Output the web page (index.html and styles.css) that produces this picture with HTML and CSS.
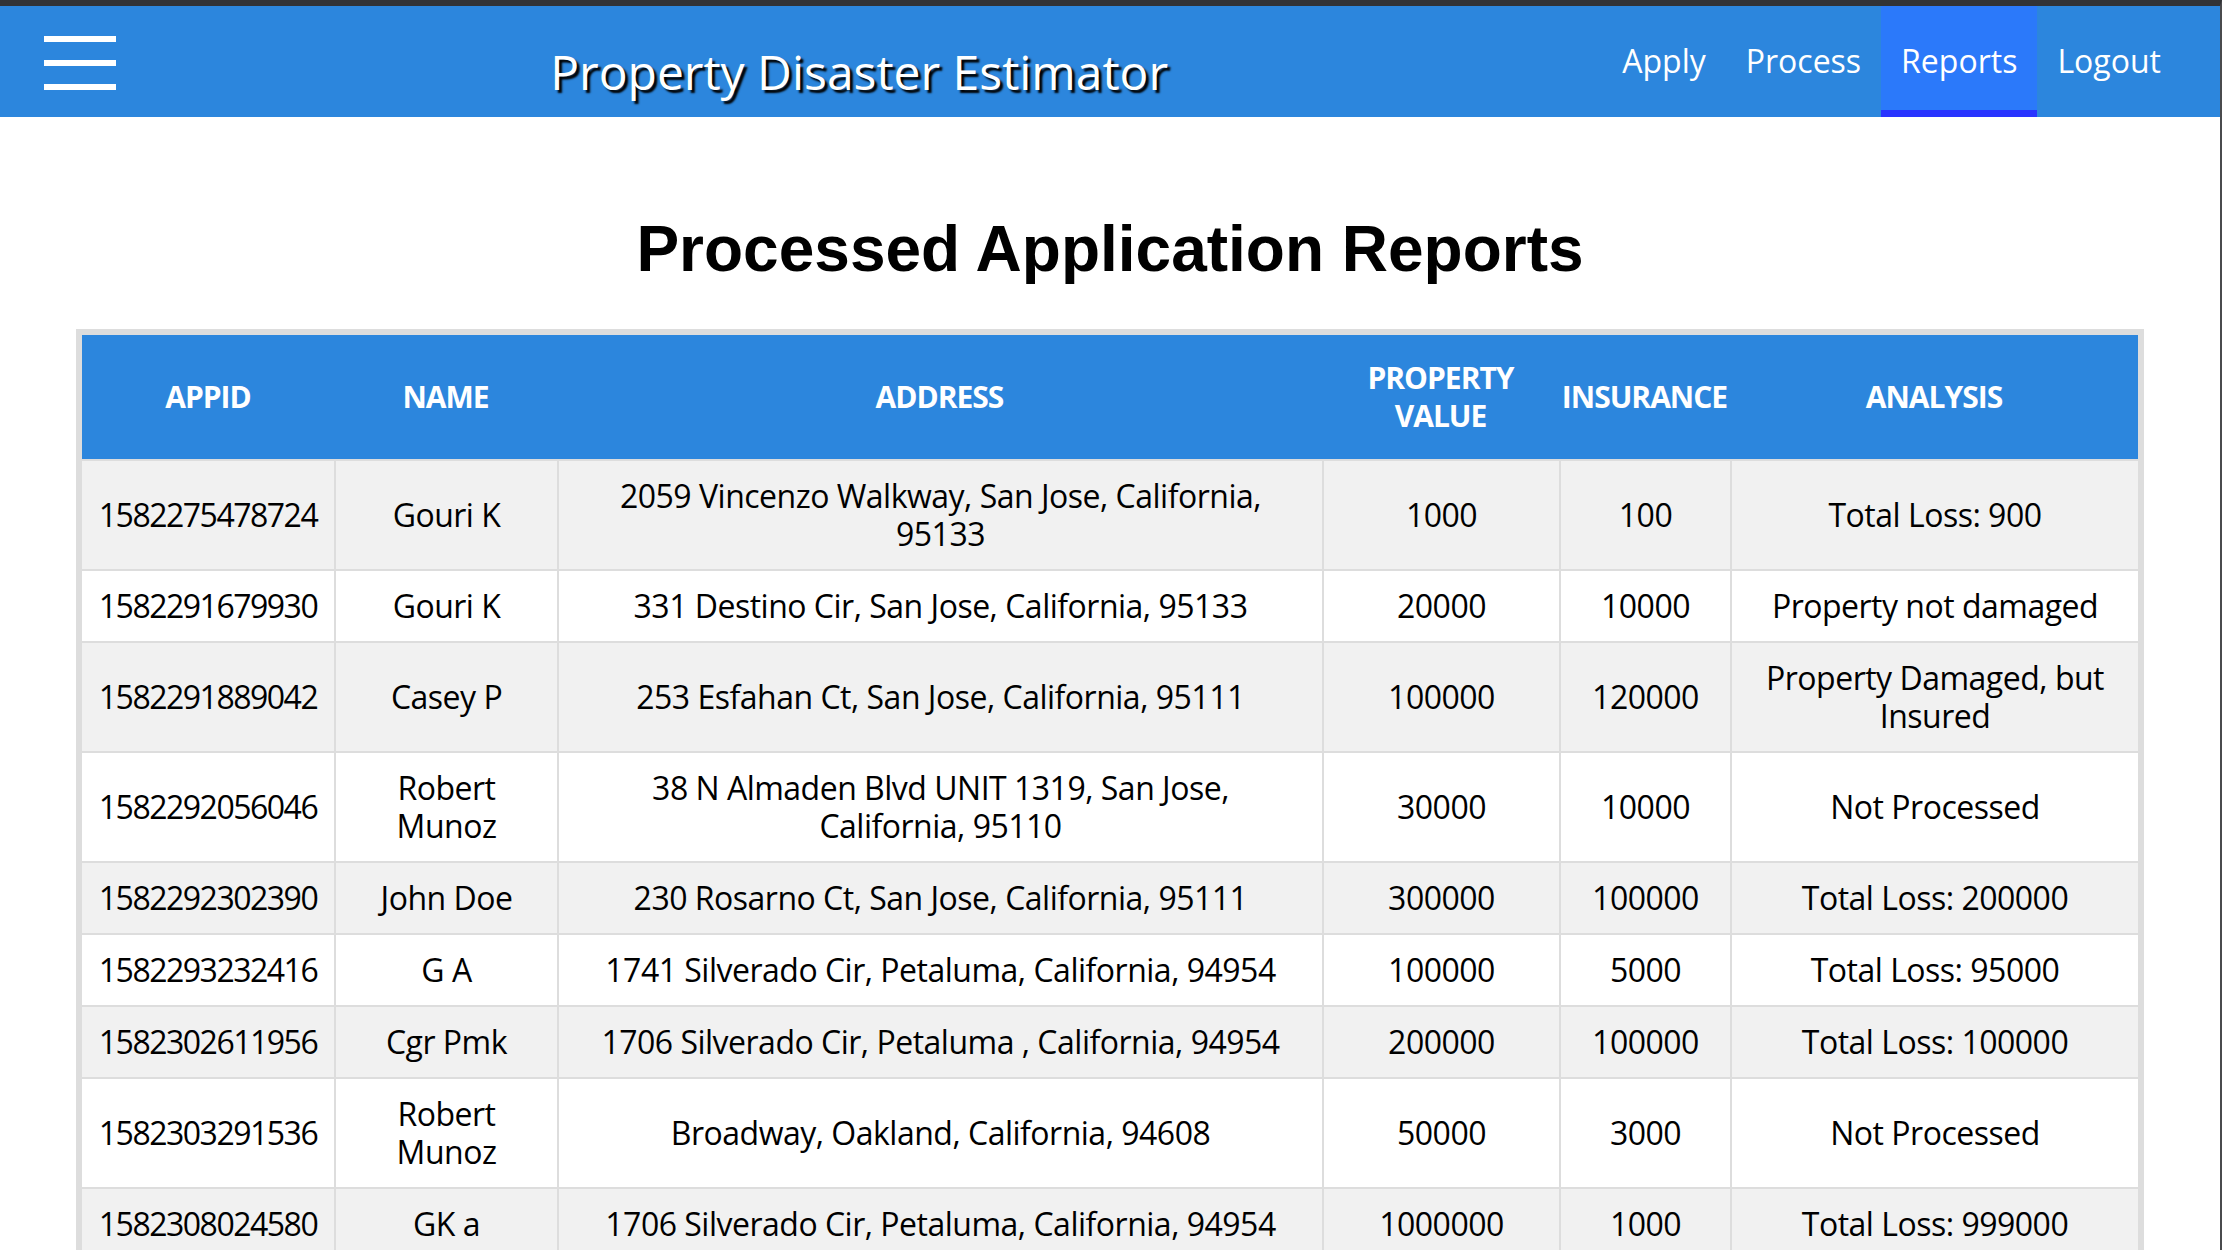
FILE: index.html
```html
<!DOCTYPE html>
<html lang="en">
<head>
<meta charset="utf-8">
<title>Property Disaster Estimator - Reports</title>
<link rel="stylesheet" href="styles.css">
</head>
<body>
<div class="window">
  <header class="topnav">
    <div class="burger" aria-label="Menu"><span></span><span></span><span></span></div>
    <div class="brand">Property Disaster Estimator</div>
    <nav class="links">
      <a href="#">Apply</a>
      <a href="#">Process</a>
      <a href="#" class="active">Reports</a>
      <a href="#">Logout</a>
    </nav>
  </header>
  <main class="content">
    <h1 class="page-title">Processed Application Reports</h1>
    <div class="table-frame">
      <table class="reports">
        <colgroup>
          <col class="c-id">
          <col class="c-name">
          <col class="c-addr">
          <col class="c-value">
          <col class="c-ins">
          <col class="c-analysis">
        </colgroup>
        <thead>
          <tr>
            <th>APPID</th>
            <th>NAME</th>
            <th>ADDRESS</th>
            <th>PROPERTY VALUE</th>
            <th>INSURANCE</th>
            <th>ANALYSIS</th>
          </tr>
        </thead>
        <tbody>
          <tr><td>1582275478724</td><td>Gouri K</td><td>2059 Vincenzo Walkway, San Jose, California, 95133</td><td>1000</td><td>100</td><td>Total Loss: 900</td></tr>
          <tr><td>1582291679930</td><td>Gouri K</td><td>331 Destino Cir, San Jose, California, 95133</td><td>20000</td><td>10000</td><td>Property not damaged</td></tr>
          <tr><td>1582291889042</td><td>Casey P</td><td>253 Esfahan Ct, San Jose, California, 95111</td><td>100000</td><td>120000</td><td>Property Damaged, but Insured</td></tr>
          <tr><td>1582292056046</td><td>Robert Munoz</td><td>38 N Almaden Blvd UNIT 1319, San Jose, California, 95110</td><td>30000</td><td>10000</td><td>Not Processed</td></tr>
          <tr><td>1582292302390</td><td>John Doe</td><td>230 Rosarno Ct, San Jose, California, 95111</td><td>300000</td><td>100000</td><td>Total Loss: 200000</td></tr>
          <tr><td>1582293232416</td><td>G A</td><td>1741 Silverado Cir, Petaluma, California, 94954</td><td>100000</td><td>5000</td><td>Total Loss: 95000</td></tr>
          <tr><td>1582302611956</td><td>Cgr Pmk</td><td>1706 Silverado Cir, Petaluma , California, 94954</td><td>200000</td><td>100000</td><td>Total Loss: 100000</td></tr>
          <tr><td>1582303291536</td><td>Robert Munoz</td><td>Broadway, Oakland, California, 94608</td><td>50000</td><td>3000</td><td>Not Processed</td></tr>
          <tr><td>1582308024580</td><td>GK a</td><td>1706 Silverado Cir, Petaluma, California, 94954</td><td>1000000</td><td>1000</td><td>Total Loss: 999000</td></tr>
        </tbody>
      </table>
    </div>
  </main>
</div>
</body>
</html>
```
FILE: styles.css
```css
html {
  scrollbar-width: none;
}
html::-webkit-scrollbar {
  display: none;
}
body {
  margin: 0;
  background: #ffffff;
  font-family: "Open Sans", "Noto Sans", sans-serif;
  color: #000;
}
.window {
  box-sizing: border-box;
  min-height: 100vh;
  border-top: 6px solid #323336;
  border-right: 2px solid #4a4b4e;
}

/* ---------- top navigation ---------- */
.topnav {
  display: flex;
  height: 111px;
  background: #2c86dd;
  padding: 0 39px 0 44px;
}
.burger {
  align-self: flex-start;
  margin-top: 30px;
  width: 72px;
  display: flex;
  flex-direction: column;
  gap: 18px;
}
.burger span {
  display: block;
  height: 6px;
  background: #ffffff;
}
.brand {
  flex: 1;
  align-self: flex-start;
  padding-top: 33px;
  text-align: center;
  font-family: "Open Sans", sans-serif;
  font-size: 48px;
  color: #ffffff;
  text-shadow: 3px 3px 2px #000;
  white-space: nowrap;
}
.links {
  display: flex;
}
.links a {
  box-sizing: border-box;
  display: flex;
  align-items: center;
  padding: 4px 20px 0;
  border-bottom: 7px solid transparent;
  color: #ffffff;
  text-decoration: none;
  font-family: "Open Sans", sans-serif;
  font-size: 32px;
}
.links a.active {
  background: #2b79fa;
  border-bottom-color: #2834ff;
}

/* ---------- content ---------- */
.page-title {
  margin: 95px 0 43px;
  text-align: center;
  font-family: "Liberation Sans", Arial, sans-serif;
  font-weight: bold;
  font-size: 64px;
  line-height: normal;
  color: #000;
}
.table-frame {
  box-sizing: border-box;
  width: 2068px;
  margin: 0 auto;
  border: 6px solid #dddddd;
}
.reports {
  width: 100%;
  table-layout: fixed;
  border-collapse: separate;
  border-spacing: 0;
}
.c-id { width: 252px; }
.c-name { width: 223px; }
.c-addr { width: 765px; }
.c-value { width: 237px; }
.c-ins { width: 171px; }
.c-analysis { width: 408px; }

.reports th {
  background: #2c86dd;
  color: #ffffff;
  padding: 24px 2px;
  font-family: "Open Sans", sans-serif;
  font-weight: bold;
  font-size: 30px;
  letter-spacing: -1px;
  line-height: 38px;
  text-align: center;
  vertical-align: middle;
}
.reports td {
  padding: 16px 24px;
  border-top: 2px solid #dddddd;
  border-left: 2px solid #dddddd;
  font-family: "Open Sans", sans-serif;
  font-size: 32px;
  letter-spacing: -0.5px;
  line-height: 38px;
  text-align: center;
  vertical-align: middle;
  color: #000;
}
.reports td:first-child {
  border-left: none;
  padding-left: 6px;
  padding-right: 6px;
  letter-spacing: -1.5px;
}
.reports tbody tr:nth-child(odd) td {
  background: #f1f1f1;
}
.reports tbody tr:nth-child(even) td {
  background: #ffffff;
}
```
